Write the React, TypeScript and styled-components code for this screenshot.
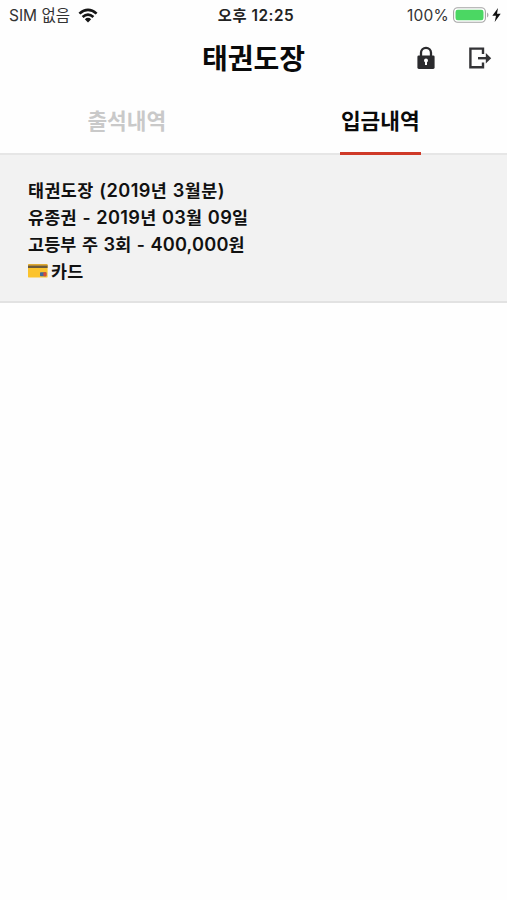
import React from "react";
import styled, { createGlobalStyle } from "styled-components";

const GlobalStyle = createGlobalStyle`
  * { box-sizing: border-box; }
  html, body { margin: 0; background: #fefefe; }
  body { font-family: Inter, "Noto Sans CJK KR", sans-serif; color: #111; }
  svg { display: block; flex: none; }
`;

const Screen = styled.div`
  width: 507px;
  height: 900px;
  display: flex;
  flex-direction: column;
  overflow: hidden;
  white-space: nowrap;
`;

const StatusBar = styled.div`
  height: 30px;
  flex: none;
  display: grid;
  grid-template-columns: 1fr auto 1fr;
  align-items: center;
  padding: 0 6px 0 9px;
  font-size: 15.5px;
  line-height: 28px;
  color: #333;
`;

const StatusGroup = styled.div<{ $end?: boolean }>`
  display: flex;
  align-items: center;
  justify-content: ${(p) => (p.$end ? "flex-end" : "flex-start")};
`;

const Carrier = styled.span`
  margin-right: 8px;
  padding-top: 2px;
`;

const Clock = styled.span`
  padding: 2px 0 0 2px;
  font-weight: 600;
  font-size: 15.3px;
  letter-spacing: 0.55px;
  color: #222;
`;

const Percent = styled.span`
  margin-right: 4px;
  padding-top: 2px;
  letter-spacing: 0.2px;
`;

const Bolt = styled.svg`
  margin-left: 3px;
`;

const Header = styled.header`
  height: 58px;
  flex: none;
  display: grid;
  grid-template-columns: 1fr auto 1fr;
  align-items: center;
`;

const Title = styled.h1`
  grid-column: 2;
  margin: 0;
  font-size: 28px;
  line-height: 56px;
  font-weight: 700;
  color: #0a0a0a;
`;

const Actions = styled.div`
  display: flex;
  justify-content: flex-end;
  gap: 33px;
  padding: 0 15px 3px 0;
`;

const IconButton = styled.button`
  border: 0;
  padding: 0;
  background: none;
`;

const Tabs = styled.nav`
  height: 67px;
  flex: none;
  display: grid;
  grid-template-columns: 1fr 1fr;
  justify-items: center;
  border-bottom: 2px solid #e6e6e6;
`;

const Tab = styled.button<{ $active?: boolean }>`
  width: 81px;
  height: 67px;
  border: 0;
  border-bottom: 3px solid ${(p) => (p.$active ? "#cf3a28" : "transparent")};
  padding: 2px 0 0;
  background: none;
  font: 700 21.4px/62px Inter, "Noto Sans CJK KR", sans-serif;
  color: ${(p) => (p.$active ? "#0a0a0a" : "#c9c9c9")};
`;

const Payment = styled.article`
  height: 148px;
  flex: none;
  padding: 22px 28px;
  background: #f2f2f2;
  border-bottom: 2px solid #e2e2e2;
`;

const Line = styled.p<{ $spacing?: number }>`
  margin: 0;
  height: 27px;
  font-size: 17.4px;
  font-weight: 600;
  line-height: 27px;
  word-spacing: 0.8px;
  letter-spacing: ${(p) => p.$spacing ?? 0.3}px;
`;

const Figure = styled.span`
  font-size: 18.2px;
`;

const MethodLine = styled(Line)`
  display: flex;
  gap: 3px;

  svg {
    margin-top: 5px;
  }
`;

const Wifi = () => (
  <svg width="20" height="15" viewBox="0 0 20 15" fill="#151515">
    <path d="M.5 4.7Q10-3.5 19.5 4.7L17.7 6.6Q10 0 2.3 6.6Z" />
    <path d="M3.7 8Q10 2.6 16.3 8L14.5 9.9Q10 6.2 5.5 9.9Z" />
    <path d="M6.8 11.2Q10 8.4 13.2 11.2L10 14.4Z" />
  </svg>
);

const Battery = () => (
  <svg width="36" height="16" viewBox="0 0 36 16">
    <rect x=".6" y=".8" width="31.8" height="14.4" rx="4" fill="#fff" stroke="#a4a4a4" strokeWidth="1.1" />
    <rect x="2.5" y="2.8" width="28" height="10.4" rx="2.2" fill="#4bd763" />
    <path d="M34 5.5Q35.5 6.2 35.5 8T34 10.5Z" fill="#aaa" />
  </svg>
);

const Lock = () => (
  <svg width="18" height="24" viewBox="0 0 18 24">
    <path d="M4 10V6.8a5 5 0 0 1 10 0V10" fill="none" stroke="#2a2a2d" strokeWidth="2.3" />
    <rect x=".4" y="9.4" width="17.2" height="13.6" rx="1.4" fill="#2a2a2d" />
    <circle cx="9" cy="14.4" r="2" fill="#fff" />
    <path d="M8 14.4h2v4.6H8Z" fill="#fff" />
  </svg>
);

const Exit = () => (
  <svg width="24" height="24" viewBox="0 0 24 24">
    <path d="M15 8V2.6H2.4v18.6H15V16.4" fill="none" stroke="#333336" strokeWidth="2.4" />
    <path d="M10 12.2h9" stroke="#333336" strokeWidth="2.4" />
    <path d="M17.8 7L23.2 12.2L17.8 17.4Z" fill="#333336" />
  </svg>
);

const Card = () => (
  <svg width="20" height="16" viewBox="0 0 20 16">
    <rect x="0" y="1" width="19.6" height="13.6" rx="1.2" fill="#fbc32d" />
    <path d="M0 2.2Q0 1 1.4 1H18.2Q19.6 1 19.6 2.2V3H0Z" fill="#e0aa35" />
    <rect y="2.6" width="19.6" height="2.4" fill="#6b5a3c" />
    <rect x="12" y="9.2" width="6.4" height="4" rx=".7" fill="#3f6b9c" />
    <rect x="15.4" y="9.2" width="3" height="4" rx=".7" fill="#db4b35" />
  </svg>
);

export default function App() {
  return (
    <Screen>
      <GlobalStyle />
      <StatusBar>
        <StatusGroup>
          <Carrier>SIM 없음</Carrier>
          <Wifi />
        </StatusGroup>
        <Clock>오후 12:25</Clock>
        <StatusGroup $end>
          <Percent>100%</Percent>
          <Battery />
          <Bolt width="9" height="14" viewBox="0 0 9 14">
            <path d="M6 0L.3 7.8H4L2.7 14L8.7 5.7H5Z" fill="#111" />
          </Bolt>
        </StatusGroup>
      </StatusBar>
      <Header>
        <Title>태권도장</Title>
        <Actions>
          <IconButton aria-label="잠금"><Lock /></IconButton>
          <IconButton aria-label="로그아웃"><Exit /></IconButton>
        </Actions>
      </Header>
      <Tabs>
        <Tab>출석내역</Tab>
        <Tab $active>입금내역</Tab>
      </Tabs>
      <Payment>
        <Line $spacing={0.42}>태권도장 <Figure>(2019</Figure>년 <Figure>3</Figure>월분<Figure>)</Figure></Line>
        <Line>유종권 - <Figure>2019</Figure>년 <Figure>03</Figure>월 <Figure>09</Figure>일</Line>
        <Line $spacing={0.18}>고등부 주 <Figure>3</Figure>회 - <Figure>400,000</Figure>원</Line>
        <MethodLine><Card />카드</MethodLine>
      </Payment>
    </Screen>
  );
}
